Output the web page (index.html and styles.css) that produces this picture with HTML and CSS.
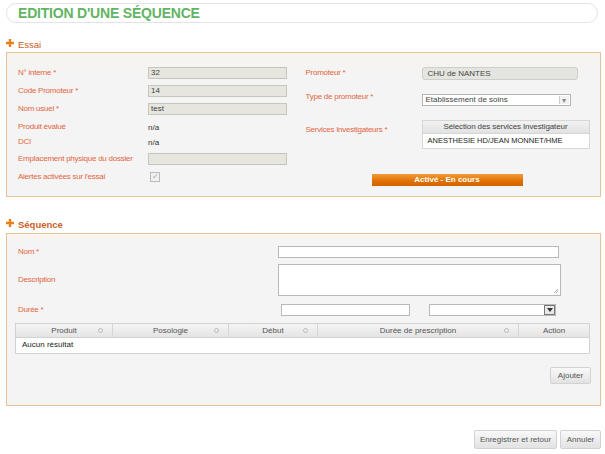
FILE: index.html
```html
<!DOCTYPE html>
<html lang="fr">
<head>
<meta charset="utf-8">
<title>Edition d'une séquence</title>
<link rel="stylesheet" href="styles.css">
</head>
<body>
<div class="page">
  <div class="title-bar"><h1>EDITION D'UNE SÉQUENCE</h1></div>

  <div class="section-head"><svg class="plus" width="8" height="8" viewBox="0 0 8 8"><path d="M4 0 V8 M0 4 H8" stroke="#e8801a" stroke-width="2.4"/></svg><span class="section-title">Essai</span></div>
  <div class="panel panel-essai">
    <div class="col-left">
      <div class="lbl">N° interne *</div><div class="ctl"><span class="ro-input">32</span></div>
      <div class="lbl">Code Promoteur *</div><div class="ctl"><span class="ro-input">14</span></div>
      <div class="lbl">Nom usuel *</div><div class="ctl"><span class="ro-input">test</span></div>
      <div class="lbl">Produit évalué</div><div class="ctl val">n/a</div>
      <div class="lbl">DCI</div><div class="ctl val">n/a</div>
      <div class="lbl">Emplacement physique du dossier</div><div class="ctl"><span class="ro-input"></span></div>
      <div class="lbl">Alertes activées sur l'essai</div><div class="ctl"><span class="checkbox">✓</span></div>
    </div>
    <div class="col-right">
      <div class="r-row r-promoteur">
        <div class="r-lbl">Promoteur *</div>
        <div class="pill-box">CHU de NANTES</div>
      </div>
      <div class="r-row r-type">
        <div class="r-lbl">Type de promoteur *</div>
        <div class="select-box"><span>Etablissement de soins</span><span class="sel-arrow">▾</span></div>
      </div>
      <div class="r-row r-services">
        <div class="r-lbl">Services Investigateurs *</div>
        <div class="svc-table">
          <div class="svc-head">Sélection des services Investigateur</div>
          <div class="svc-row">ANESTHESIE HD/JEAN MONNET/HME</div>
        </div>
      </div>
      <div class="status-btn">Activé - En cours</div>
    </div>
  </div>

  <div class="section-head section-head-seq"><svg class="plus" width="8" height="8" viewBox="0 0 8 8"><path d="M4 0 V8 M0 4 H8" stroke="#e8801a" stroke-width="2.4"/></svg><span class="section-title bold">Séquence</span></div>
  <div class="panel panel-seq">
    <div class="s-row s-nom">
      <div class="s-lbl">Nom *</div>
      <span class="w-input w-nom"></span>
    </div>
    <div class="s-row s-desc">
      <div class="s-lbl">Description</div>
      <span class="w-textarea"><svg class="grip" width="6" height="6" viewBox="0 0 6 6"><path d="M5 1 L1 5 M5 3 L3 5" stroke="#999" stroke-width="0.8"/></svg></span>
    </div>
    <div class="s-row s-duree">
      <div class="s-lbl">Durée *</div>
      <span class="w-input w-duree"></span>
      <span class="w-select"><span class="w-sel-btn"><svg width="6" height="4" viewBox="0 0 6 4"><path d="M0 0 H6 L3 4 Z" fill="#333"/></svg></span></span>
    </div>
    <div class="grid">
      <div class="g-head">
        <div class="g-th c1">Produit<span class="sort"></span></div>
        <div class="g-th c2">Posologie<span class="sort"></span></div>
        <div class="g-th c3">Début<span class="sort"></span></div>
        <div class="g-th c4">Durée de prescription<span class="sort"></span></div>
        <div class="g-th c5">Action</div>
      </div>
      <div class="g-row">Aucun résultat</div>
    </div>
    <div class="add-row"><span class="btn btn-add">Ajouter</span></div>
  </div>

  <div class="footer">
    <span class="btn btn-save">Enregistrer et retour</span>
    <span class="btn btn-cancel">Annuler</span>
  </div>
</div>
</body>
</html>
```

FILE: styles.css
```css
* { box-sizing: border-box; }
html, body { margin: 0; padding: 0; background: #fff; }
body {
  font-family: "Liberation Sans", Arial, sans-serif;
  font-size: 8px;
  color: #333;
}
.page { width: 605px; padding: 3px 4px 0 6px; }

.title-bar {
  width: 592px;
  height: 20px;
  border: 1px solid #e4e4e4;
  border-radius: 10px;
  padding-left: 11px;
  display: flex;
  align-items: center;
}
.title-bar h1 {
  margin: 0;
  font-size: 14px;
  font-weight: bold;
  color: #62b463;
  letter-spacing: -0.2px;
}

.section-head {
  height: 16px;
  margin-top: 13px;
  display: flex;
  align-items: center;
  gap: 4px;
}
.section-head-seq { margin-top: 18px; height: 18px; }
.plus { display: block; margin-top: -2px; }
.section-title { color: #c8602a; font-size: 9.5px; }
.section-title.bold { font-weight: bold; }

.panel {
  width: 595px;
  border: 1px solid #e6c29a;
  background: #f4f4f4;
}
.panel-essai {
  height: 145px;
  display: flex;
  padding: 11px 0 0 11px;
  background: linear-gradient(#f8f4ee, #f4f4f4 20px);
}
.col-left {
  width: 288px;
  display: grid;
  grid-template-columns: 130px 139px;
  grid-template-rows: 18px 18px 18px 18px 12px 22px 14px;
  align-items: center;
}
.lbl { color: #e2653f; line-height: 10px; letter-spacing: -0.25px; }
.val { color: #333; }
.ro-input {
  display: block;
  height: 12px;
  background: #e6e6de;
  border: 1px solid #c6c6be;
  padding-left: 2px;
  line-height: 10px;
  color: #444;
}
.checkbox {
  display: inline-block;
  width: 10px;
  height: 10px;
  margin-left: 2px;
  border: 1px solid #bbb;
  background: #f0f0f0;
  color: #aaa;
  font-size: 8px;
  line-height: 8px;
  text-align: center;
}

.col-right { width: 295px; display: flex; flex-direction: column; }
.r-row { display: flex; }
.r-lbl { width: 116px; color: #e2653f; line-height: 10px; letter-spacing: -0.25px; }
.r-promoteur { height: 18px; align-items: center; }
.pill-box {
  width: 156px;
  height: 13px;
  background: #e4e4e0;
  border: 1px solid #cfcfca;
  border-radius: 3px;
  padding-left: 5px;
  line-height: 11px;
  color: #444;
}
.r-type { margin-top: 12px; align-items: flex-start; }
.r-type .r-lbl { margin-top: -2px; }
.select-box {
  width: 149px;
  height: 12px;
  background: #fff;
  border: 1px solid #b4b4b4;
  padding-left: 3px;
  line-height: 10px;
  display: flex;
  justify-content: space-between;
  color: #444;
}
.sel-arrow {
  width: 10px;
  border-left: 1px solid #ccc;
  text-align: center;
  color: #888;
  font-size: 8px;
  line-height: 10px;
  margin: 1px 1px 1px 0;
  background: #f2f2f2;
}
.r-services { margin-top: 14px; align-items: flex-start; }
.r-services .r-lbl { padding-top: 5px; }
.svc-table { width: 168px; border: 1px solid #d6d6d6; background: #fff; }
.svc-head {
  height: 13px;
  line-height: 12px;
  text-align: center;
  background: linear-gradient(#f2f2f2, #e2e2e2);
  border-bottom: 1px solid #d6d6d6;
  color: #444;
  letter-spacing: -0.1px;
}
.svc-row { height: 14px; line-height: 13px; padding-left: 5px; color: #222; font-size: 7.5px; }
.status-btn {
  margin-top: 25px;
  margin-left: 66px;
  width: 151px;
  height: 12px;
  background: linear-gradient(#f29a3a, #e07000 60%, #d06400);
  color: #fff;
  font-weight: bold;
  text-align: center;
  line-height: 12px;
  font-size: 8px;
}

.panel-seq {
  height: 173px;
  padding: 12px 9px 0 11px;
  background: linear-gradient(#fbf6ef, #f4f4f4 10px);
}
.s-row { display: flex; align-items: center; }
.s-lbl { width: 260px; color: #e2653f; line-height: 10px; letter-spacing: -0.25px; }
.w-input { display: block; height: 12px; background: #fff; border: 1px solid #b8b8b8; }
.w-nom { width: 281px; }
.s-desc { margin-top: 6px; }
.w-textarea {
  display: block;
  width: 283px;
  height: 32px;
  background: #fff;
  border: 1px solid #b8b8b8;
  position: relative;
}
.grip { position: absolute; right: 1px; bottom: 1px; }
.s-duree { margin-top: 8px; }
.w-duree { width: 129px; margin-left: 3px; }
.w-select {
  display: flex;
  justify-content: flex-end;
  width: 127px;
  height: 12px;
  margin-left: 19px;
  background: #fff;
  border: 1px solid #b8b8b8;
}
.w-sel-btn {
  width: 11px;
  height: 10px;
  border: 1px solid #777;
  background: #e8e8e8;
  display: flex;
  align-items: center;
  justify-content: center;
}
.grid {
  margin-top: 7px;
  margin-left: -3px;
  width: 575px;
  border: 1px solid #d2d2d2;
  background: #fff;
}
.g-head {
  display: flex;
  height: 14px;
  background: linear-gradient(#f4f4f4, #e4e4e4);
  border-bottom: 1px solid #d2d2d2;
}
.g-th {
  position: relative;
  text-align: center;
  line-height: 13px;
  color: #555;
  border-right: 1px solid #d6d6d6;
}
.g-th.c5 { border-right: none; }
.c1 { width: 97px; }
.c2 { width: 116px; }
.c3 { width: 89px; }
.c4 { width: 201px; }
.c5 { width: 70px; }
.sort {
  position: absolute;
  right: 9px;
  top: 4px;
  width: 5px;
  height: 5px;
  border: 1px solid #bbb;
  border-radius: 50%;
}
.g-row { height: 15px; line-height: 14px; padding-left: 6px; color: #222; }

.add-row { display: flex; justify-content: flex-end; margin-top: 13px; }
.btn {
  display: inline-block;
  background: linear-gradient(#f9f9f9, #e2e2e2);
  border: 1px solid #d2d2d2;
  border-radius: 2px;
  color: #555;
  text-align: center;
  font-size: 8px;
}
.btn-add { width: 41px; height: 17px; line-height: 15px; }

.footer {
  display: flex;
  justify-content: flex-end;
  gap: 3px;
  margin-top: 24px;
}
.btn-save { width: 83px; height: 19px; line-height: 17px; }
.btn-cancel { width: 41px; height: 19px; line-height: 17px; }
```
